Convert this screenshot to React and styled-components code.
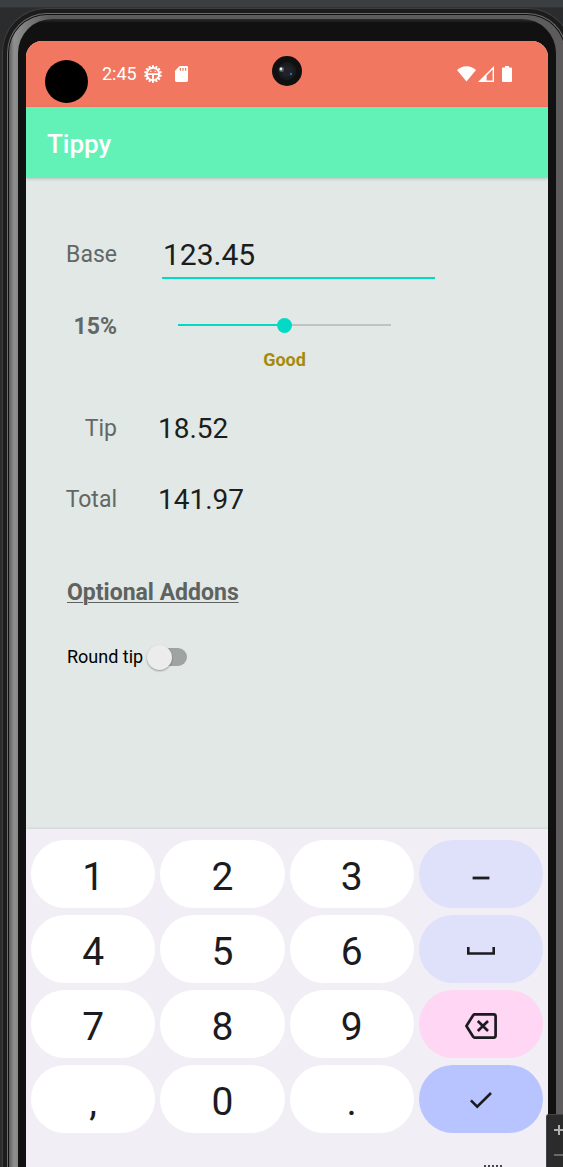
import React, { useState } from 'react';
import styled, { createGlobalStyle } from 'styled-components';

const GlobalStyle = createGlobalStyle`
  *, *::before, *::after { box-sizing: border-box; }
  body {
    margin: 0;
    background: #2b2c2e;
    font-family: Roboto, "Liberation Sans", sans-serif;
  }
  button, input { font: inherit; color: inherit; margin: 0; }
`;

/* ---- emulator window and device frame ---- */

const Workspace = styled.div`
  position: relative;
  display: flex;
  flex-direction: column;
  height: 100vh;
  overflow: hidden;
  background: #2b2c2e;
`;

const ToolStrip = styled.div`
  flex: none;
  height: 8px;
  background: #3c3f41;
  border-bottom: 1px solid #313335;
`;

const Shell = styled.div`
  flex: 1;
  display: flex;
  margin: 0 -9px 0 2px;
  padding: 4px 4px 0;
  border: 1px solid #3e3e3e;
  border-bottom: 0;
  border-radius: 44px 44px 0 0;
  background: #1c1c1c;
`;

const Rim = styled.div`
  flex: 1;
  display: flex;
  padding: 1px 1px 0;
  border: 1px solid #6c6c6c;
  border-bottom: 0;
  border-radius: 40px 40px 0 0;
  background: #101010;
`;

const Metal = styled.div`
  flex: 1;
  display: flex;
  padding: 4px 9px 0;
  border-radius: 38px 38px 0 0;
  background: linear-gradient(90deg, #5c5c5c 0, #8f8f8f 5px, #858585 12px, #5d5b5c 40px);
`;

const Glass = styled.div`
  flex: 1;
  display: flex;
  padding: 22px 8px 0;
  border-radius: 34px 34px 0 0;
  background: linear-gradient(#2c2c2c, #111111 4px);
`;

const Screen = styled.div`
  position: relative;
  flex: 1;
  display: flex;
  flex-direction: column;
  overflow: hidden;
  border-radius: 16px 16px 0 0;
  background: #e1e8e5;
`;

const ZoomPanel = styled.div`
  position: absolute;
  right: -9px;
  bottom: 0;
  display: flex;
  flex-direction: column;
  width: 26px;
  padding-top: 2px;
  border: 1px solid #454545;
  border-bottom: 0;
  border-radius: 3px 0 0 0;
  background: #2b2b2b;
`;

const ZoomButton = styled.button`
  display: flex;
  align-items: center;
  justify-content: center;
  height: 25px;
  padding: 0;
  border: 0;
  background: none;
  color: ${(p) => (p.$dim ? '#6a6a6a' : '#b0b0b0')};
`;

/* ---- status bar and app bar ---- */

const StatusBar = styled.div`
  flex: none;
  display: flex;
  align-items: flex-start;
  height: 66px;
  padding: 19px 36px 0 19px;
  background: #f17761;
  color: #ffffff;
`;

const Cutout = styled.div`
  width: 43px;
  height: 43px;
  margin-right: 14px;
  border-radius: 50%;
  background: #000000;
`;

const StatusGroup = styled.div`
  display: flex;
  align-items: center;
  gap: ${(p) => p.$gap}px;
  height: 20px;
  margin-top: 4px;
  margin-left: ${(p) => (p.$end ? 'auto' : '0')};
`;

const SignalPair = styled.span`
  display: flex;
  gap: 2px;
`;

const ClockGroup = styled.span`
  display: flex;
  align-items: center;
  gap: 7px;
  font-size: 18px;
  line-height: 20px;
`;

const Camera = styled.svg`
  position: absolute;
  top: 15px;
  left: 50%;
  margin-left: -15px;
`;

const AppBar = styled.header`
  position: relative;
  flex: none;
  display: flex;
  align-items: center;
  height: 71px;
  padding: 2px 21px 0;
  background: #62f2b8;
  box-shadow: 0 1px 3px rgba(0, 0, 0, 0.18);
`;

const Title = styled.h1`
  margin: 0;
  font-size: 26px;
  line-height: 32px;
  font-weight: 500;
  color: #ffffff;
`;

/* ---- form ---- */

const Form = styled.form`
  flex: 1;
  padding: 53px 113px 0 41px;
`;

const Row = styled.div`
  display: grid;
  grid-template-columns: 50px 1fr;
  column-gap: 41px;
  align-items: center;
  margin-top: ${(p) => p.$top || 0}px;
`;

const Label = styled.label`
  justify-self: end;
  font-size: 23px;
  line-height: 28px;
  font-weight: ${(p) => (p.$bold ? 700 : 400)};
  color: #636765;
`;

const AmountInput = styled.input`
  min-width: 0;
  height: 48px;
  margin-left: 4px;
  padding: 0 1px;
  border: 0;
  border-bottom: 2px solid #03dac5;
  border-radius: 0;
  outline: 0;
  background: none;
  font-size: 30px;
  color: #1c1d1d;
`;

const Slider = styled.input`
  appearance: none;
  min-width: 0;
  height: 16px;
  margin: 0 44px 4px 20px;
  background:
    linear-gradient(#03dac5, #03dac5) left center / var(--fill) 2px no-repeat,
    linear-gradient(#bfc4c2, #bfc4c2) left center / 100% 2px no-repeat;

  &::-webkit-slider-thumb {
    appearance: none;
    width: 15px;
    height: 15px;
    border-radius: 50%;
    background: #03dac5;
  }
`;

const Rating = styled.p`
  grid-column: 2;
  margin: 9px 44px 0 20px;
  font-size: 18px;
  line-height: 20px;
  font-weight: 700;
  text-align: center;
  color: #a68b0b;
`;

const Amount = styled.output`
  font-size: 28px;
  line-height: 32px;
  color: #1c1d1d;
`;

const SectionTitle = styled.h2`
  margin: 63px 0 0;
  font-size: 23px;
  line-height: 28px;
  font-weight: 700;
  text-decoration: underline;
  text-decoration-thickness: 1px;
  text-underline-offset: 2px;
  color: #5e6260;
`;

const SwitchLabel = styled.label`
  display: flex;
  align-items: center;
  gap: 4px;
  margin-top: 37px;
  font-size: 18px;
  line-height: 26px;
  color: #000000;
`;

const Switch = styled.input`
  appearance: none;
  display: grid;
  align-items: center;
  width: 40px;
  height: 26px;

  &::before, &::after { content: ''; grid-area: 1 / 1; }

  &::before {
    height: 18px;
    margin-left: 6px;
    border-radius: 9px;
    background: #9fa3a1;
  }

  &::after {
    width: 25px;
    height: 25px;
    border-radius: 50%;
    background: #ececec;
    box-shadow: 0 1px 2px rgba(0, 0, 0, 0.35);
  }

  &:checked::after { justify-self: end; background: #03dac5; }
`;

/* ---- keyboard ---- */

const Keyboard = styled.div`
  position: relative;
  flex: none;
  padding: 11px 5px 0;
  background: #f1eff5;
  box-shadow: 0 0 3px rgba(0, 0, 0, 0.15);
`;

const Keys = styled.div`
  display: grid;
  grid-template-columns: repeat(4, 1fr);
  gap: 7px 5px;
`;

const keyColors = {
  digit: '#ffffff',
  symbol: '#dfe0fa',
  space: '#dfe0fa',
  erase: '#ffd6f3',
  enter: '#b7c4ff',
};

const keyTop = { digit: 6, symbol: 8, space: 4, erase: 4, enter: 2 };

const Key = styled.button`
  display: flex;
  align-items: center;
  justify-content: center;
  height: 68px;
  padding: ${(p) => keyTop[p.$kind]}px 0 0;
  border: 0;
  border-radius: 34px;
  background: ${(p) => keyColors[p.$kind]};
  font-size: 39px;
  line-height: 46px;
  color: #1b1b20;
`;

const KeyboardFooter = styled.div`
  display: flex;
  align-items: flex-end;
  justify-content: flex-end;
  height: 34px;
  padding-right: 39px;
`;

/* ---- icons ---- */

const teeth = Array.from({ length: 14 }, (_, i) => (i * 360) / 14);

const DebugIcon = () => (
  <svg width="18" height="18" viewBox="0 0 18 18" fill="none" stroke="currentColor" aria-hidden="true">
    <circle cx="9" cy="9" r="6.2" strokeWidth="2" />
    {teeth.map((a) => (
      <path key={a} d="M9 2.4V.2" strokeWidth="2" transform={`rotate(${a} 9 9)`} />
    ))}
    <path d="M3 9.2h12M9 9.2V15" strokeWidth="1.8" />
    <path d="M6.2 6.4h1.2M10.6 6.4h1.2" strokeWidth="1.4" />
  </svg>
);

const SdIcon = () => (
  <svg width="13" height="16" viewBox="0 0 13 16" aria-hidden="true">
    <path d="M4.6 0H11.6Q13 0 13 1.4V14.6Q13 16 11.6 16H1.4Q0 16 0 14.6V4.8Z" fill="currentColor" />
    <path d="M5.4 2V4.8M8 2V4.8M10.6 2V4.8" stroke="#f17761" strokeWidth="1.3" />
  </svg>
);

const WifiIcon = () => (
  <svg width="19" height="16" viewBox="0 0 19 16" aria-hidden="true">
    <path d="M9.5 15.6 0 4Q4 .2 9.5.2T19 4Z" fill="currentColor" />
  </svg>
);

const SignalIcon = () => (
  <svg width="16" height="16" viewBox="0 0 16 16" aria-hidden="true">
    <path d="M0 16 16 0V16ZM8.6 14.6H14.6V3.4L8.6 9.4Z" fillRule="evenodd" fill="currentColor" />
  </svg>
);

const BatteryIcon = () => (
  <svg width="10" height="16" viewBox="0 0 10 16" aria-hidden="true">
    <path d="M3 0H7V1.4H9Q10 1.4 10 2.4V15Q10 16 9 16H1Q0 16 0 15V2.4Q0 1.4 1 1.4H3Z" fill="currentColor" />
  </svg>
);

const DashIcon = () => (
  <svg width="18" height="4" viewBox="0 0 18 4" stroke="currentColor" strokeWidth="2.8" aria-hidden="true">
    <path d="M.6 2H17.4" />
  </svg>
);

const SpaceIcon = () => (
  <svg width="28" height="8" viewBox="0 0 28 8" fill="none" stroke="currentColor" strokeWidth="2.6" aria-hidden="true">
    <path d="M1.3 0V6.5H26.7V0" />
  </svg>
);

const BackspaceIcon = () => (
  <svg width="32" height="26" viewBox="0 0 32 26" fill="none" stroke="currentColor" strokeWidth="2.7" strokeLinejoin="round" aria-hidden="true">
    <path d="M9.6 1.4H28.6Q30.6 1.4 30.6 3.4V22.6Q30.6 24.6 28.6 24.6H9.6Q8.8 24.6 8.2 23.8L1.4 13 8.2 2.2Q8.8 1.4 9.6 1.4Z" />
    <path d="M12.8 8 23 18M23 8 12.8 18" />
  </svg>
);

const CheckIcon = () => (
  <svg width="22" height="17" viewBox="0 0 22 17" fill="none" stroke="currentColor" strokeWidth="2.6" aria-hidden="true">
    <path d="M.9 8.4 7.2 14.7 21 1" />
  </svg>
);

const keys = [
  ['1'], ['2'], ['3'], [<DashIcon />, 'symbol', 'Minus'],
  ['4'], ['5'], ['6'], [<SpaceIcon />, 'space', 'Space'],
  ['7'], ['8'], ['9'], [<BackspaceIcon />, 'erase', 'Backspace'],
  [','], ['0'], ['.'], [<CheckIcon />, 'enter', 'Done'],
];

const ratingFor = (percent) => {
  if (percent < 10) return 'Poor';
  if (percent < 15) return 'Acceptable';
  if (percent < 20) return 'Good';
  if (percent < 25) return 'Great';
  return 'Amazing';
};

export default function App() {
  const [base, setBase] = useState('123.45');
  const [percent, setPercent] = useState(15);
  const [round, setRound] = useState(false);

  const bill = parseFloat(base) || 0;
  const rawTip = (bill * percent) / 100;
  const tip = round ? Math.round(rawTip) : rawTip;

  return (
    <>
      <GlobalStyle />
      <Workspace>
        <ToolStrip />
        <Shell>
          <Rim>
            <Metal>
              <Glass>
                <Screen>
                  <StatusBar>
                    <Cutout />
                    <StatusGroup $gap={13}>
                      <ClockGroup>
                        2:45
                        <DebugIcon />
                      </ClockGroup>
                      <SdIcon />
                    </StatusGroup>
                    <StatusGroup $gap={8} $end>
                      <SignalPair>
                        <WifiIcon />
                        <SignalIcon />
                      </SignalPair>
                      <BatteryIcon />
                    </StatusGroup>
                  </StatusBar>
                  <Camera width="30" height="30" viewBox="0 0 30 30" aria-hidden="true">
                    <circle cx="15" cy="15" r="15" fill="#101010" />
                    <circle cx="15" cy="15" r="9" fill="#1a1b1e" />
                    <circle cx="15" cy="15" r="6" fill="#202228" />
                    <circle cx="9.6" cy="13.4" r="2.6" fill="#48515c" />
                    <circle cx="9" cy="13" r="1.4" fill="#e4eeea" />
                    <circle cx="19" cy="18" r="1.2" fill="#2f6ca5" />
                  </Camera>
                  <AppBar>
                    <Title>Tippy</Title>
                  </AppBar>
                  <Form onSubmit={(e) => e.preventDefault()}>
                    <Row>
                      <Label htmlFor="base">Base</Label>
                      <AmountInput
                        id="base"
                        inputMode="decimal"
                        value={base}
                        onChange={(e) => setBase(e.target.value)}
                      />
                    </Row>
                    <Row $top={34}>
                      <Label htmlFor="percent" $bold>{percent}%</Label>
                      <Slider
                        id="percent"
                        type="range"
                        min="0"
                        max="30"
                        value={percent}
                        style={{ '--fill': `${(percent / 30) * 100}%` }}
                        onChange={(e) => setPercent(Number(e.target.value))}
                      />
                      <Rating>{ratingFor(percent)}</Rating>
                    </Row>
                    <Row $top={43}>
                      <Label htmlFor="tip">Tip</Label>
                      <Amount id="tip">{tip.toFixed(2)}</Amount>
                    </Row>
                    <Row $top={39}>
                      <Label htmlFor="total">Total</Label>
                      <Amount id="total">{(bill + tip).toFixed(2)}</Amount>
                    </Row>
                    <SectionTitle>Optional Addons</SectionTitle>
                    <SwitchLabel>
                      Round tip
                      <Switch
                        type="checkbox"
                        role="switch"
                        checked={round}
                        onChange={(e) => setRound(e.target.checked)}
                      />
                    </SwitchLabel>
                  </Form>
                  <Keyboard>
                    <Keys>
                      {keys.map(([face, kind = 'digit', name], i) => (
                        <Key key={i} type="button" $kind={kind} aria-label={name}>
                          {face}
                        </Key>
                      ))}
                    </Keys>
                    <KeyboardFooter>
                      <svg width="20" height="2" viewBox="0 0 20 2" aria-hidden="true">
                        <path d="M0 1H20" stroke="#44444a" strokeWidth="2" strokeDasharray="2 2" />
                      </svg>
                    </KeyboardFooter>
                  </Keyboard>
                </Screen>
              </Glass>
            </Metal>
          </Rim>
        </Shell>
        <ZoomPanel>
          <ZoomButton type="button" aria-label="Zoom in">
            <svg width="10" height="10" viewBox="0 0 10 10" stroke="currentColor" strokeWidth="2" aria-hidden="true">
              <path d="M5 0V10M0 5H10" />
            </svg>
          </ZoomButton>
          <ZoomButton type="button" aria-label="Zoom out" $dim>
            <svg width="10" height="10" viewBox="0 0 10 10" stroke="currentColor" strokeWidth="2" aria-hidden="true">
              <path d="M0 5H10" />
            </svg>
          </ZoomButton>
        </ZoomPanel>
      </Workspace>
    </>
  );
}
